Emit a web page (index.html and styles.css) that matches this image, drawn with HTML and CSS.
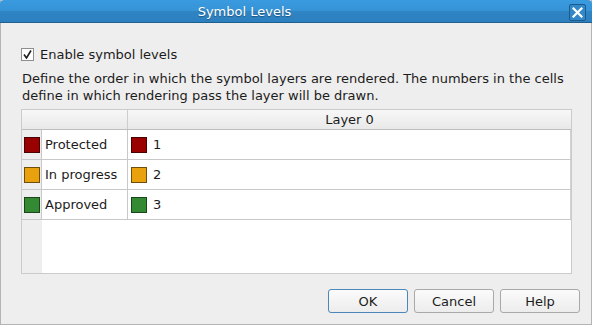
FILE: index.html
```html
<!DOCTYPE html>
<html lang="en">
<head>
    <meta charset="UTF-8">
    <title>Symbol Levels</title>
    <link rel="stylesheet" href="styles.css">
</head>
<body>
    <div class="window">
        <div class="titlebar">
            <span class="title">Symbol Levels</span>
            <span class="close">
                <svg width="11" height="11" viewBox="0 0 11 11">
                    <path d="M1.5 1.5 L9.5 9.5 M9.5 1.5 L1.5 9.5" stroke="white" stroke-width="2.2" stroke-linecap="square"/>
                </svg>
            </span>
        </div>

        <div class="content">
            <label class="check-row">
                <span class="checkbox">
                    <svg width="9" height="9" viewBox="0 0 9 9">
                        <path d="M1 4.5 L3.5 8 L8 0.5" fill="none" stroke="#1e1e1e" stroke-width="1.6"/>
                    </svg>
                </span>
                Enable symbol levels
            </label>

            <p class="hint">Define the order in which the symbol layers are rendered. The numbers in the cells define in which rendering pass the layer will be drawn.</p>

            <div class="levels">
                <div class="row header">
                    <div class="corner"></div>
                    <div class="col-layer">Layer 0</div>
                </div>

                <div class="row">
                    <div class="rowhead"><span class="swatch red"></span></div>
                    <div class="col-name">Protected</div>
                    <div class="col-layer"><span class="swatch red"></span>1</div>
                </div>
                <div class="row">
                    <div class="rowhead"><span class="swatch orange"></span></div>
                    <div class="col-name">In progress</div>
                    <div class="col-layer"><span class="swatch orange"></span>2</div>
                </div>
                <div class="row">
                    <div class="rowhead"><span class="swatch green"></span></div>
                    <div class="col-name">Approved</div>
                    <div class="col-layer"><span class="swatch green"></span>3</div>
                </div>

                <!-- empty space under the rows -->
                <div class="filler">
                    <div class="filler-head"></div>
                </div>
            </div>

            <div class="buttons">
                <button class="default">OK</button>
                <button>Cancel</button>
                <button>Help</button>
            </div>
        </div>
    </div>
</body>
</html>
```

FILE: styles.css
```css
body {
    margin: 0;
    font-family: 'DejaVu Sans', sans-serif;
    font-size: 13px;
    color: #1c1c1c;
    background: #eeeeee;
}

.window {
    width: 592px;
    height: 325px;
    box-sizing: border-box;
    border: 1px solid #b4b4b4;
    border-top: none;
    background: #eeeeee;
}

.titlebar {
    display: flex;
    align-items: center;
    height: 22px;
    margin: 0 -1px;
    padding-right: 6px;
    border-bottom: 1px solid #1f5f8e;
    border-radius: 4px 4px 0 0;
    background: linear-gradient(#3b9be0 0%, #3593d6 48%, #2f84c4 52%, #2d80bf 100%);
}

.title {
    flex: 1;
    padding-right: 80px;
    text-align: center;
    color: white;
    text-shadow: 0 1px 1px rgba(0,0,0,0.35);
}

.close {
    display: flex;
    align-items: center;
    justify-content: center;
    width: 15px;
    height: 15px;
    margin-top: 2px;
    border: 1px solid #1e5a88;
    border-radius: 2px;
    background: #3388ca;
}

.content {
    padding: 25px 0 0 20px;
}

.check-row {
    display: flex;
    align-items: center;
    gap: 6px;
    height: 13px;
}

.checkbox {
    display: flex;
    align-items: center;
    justify-content: center;
    width: 11px;
    height: 11px;
    border: 1px solid #8e8e8e;
    background: white;
}

.hint {
    margin: 9px 0 0 1px;
    line-height: 17px;
}

.levels {
    display: flex;
    flex-direction: column;
    width: 551px;
    height: 165px;
    box-sizing: border-box;
    margin-top: 5px;
    border: 1px solid #cbcbcb;
    background: white;
}

.row {
    display: flex;
    flex-shrink: 0;
    height: 30px;
    box-sizing: border-box;
    border-bottom: 1px solid #c8c8c8;
}

.row.header {
    height: 20px;
    border-bottom-color: #bdbdbd;
    background: linear-gradient(#f7f7f7, #e9e9e9);
}

.corner {
    width: 105px;
    border-right: 1px solid #cdcdcd;
}

.rowhead {
    display: flex;
    align-items: center;
    width: 17px;
    padding-left: 2px;
    border-right: 1px solid #c8c8c8;
    background: #eeeeee;
}

.col-name {
    display: flex;
    align-items: center;
    width: 82px;
    padding-left: 3px;
    border-right: 1px solid #c8c8c8;
}

.col-layer {
    display: flex;
    align-items: center;
    flex: 1;
    padding-left: 3px;
    border-right: 1px solid #d2d2d2;
}

.header .col-layer {
    justify-content: center;
    padding-left: 0;
    border-right: none;
}

.swatch {
    flex-shrink: 0;
    width: 14px;
    height: 14px;
    margin-right: 6px;
    border: 1px solid;
}

.rowhead .swatch {
    margin-right: 0;
}

.swatch.red { background: #990000; border-color: #4a0000; }
.swatch.orange { background: #eaa10e; border-color: #6e4e08; }
.swatch.green { background: #338a33; border-color: #1a451a; }

.filler {
    flex: 1;
    display: flex;
}

.filler-head {
    width: 20px;
    background: #eeeeee;
}

.buttons {
    display: flex;
    justify-content: flex-end;
    gap: 6px;
    margin-top: 15px;
    padding-right: 11px;
}

button {
    width: 80px;
    height: 24px;
    border: 1px solid #a9a9a9;
    border-radius: 3px;
    background: linear-gradient(#fbfbfb, #ececec);
    font-family: 'DejaVu Sans', sans-serif;
    font-size: 13px;
    color: #1c1c1c;
}

button.default {
    border-color: #4d86b8;
}
```
